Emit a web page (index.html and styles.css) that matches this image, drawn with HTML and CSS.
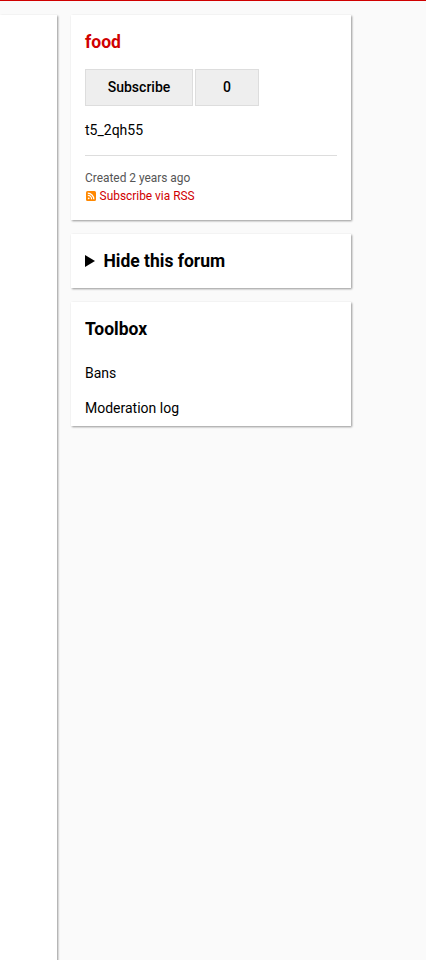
FILE: index.html
```
<!DOCTYPE html>
<html lang="en">
<head>
<meta charset="utf-8">
<title>food</title>
<link rel="stylesheet" href="styles.css">
</head>
<body>
<div class="page">
  <main class="content"></main>
  <aside class="sidebar">
    <section class="card card-forum">
      <h2 class="title"><a class="link" href="#">food</a></h2>
      <div class="subscribe">
        <button class="button button-label">Subscribe</button>
        <span class="button button-count">0</span>
      </div>
      <p class="description">t5_2qh55</p>
      <div class="meta">
        <p>Created 2 years ago</p>
        <p class="rss">
          <svg class="rss-icon" viewBox="0 0 10 10"><rect width="10" height="10" rx="1.5" fill="#ff8800"/><circle cx="2.7" cy="7.3" r=".9" fill="#fff"/><path d="M1.8 4.4a3.8 3.8 0 0 1 3.8 3.8M1.8 2.2a6 6 0 0 1 6 6" fill="none" stroke="#fff" stroke-width="1.2"/></svg>
          <a class="link" href="#">Subscribe via RSS</a>
        </p>
      </div>
    </section>
    <section class="card card-hide">
      <h2 class="title summary"><svg class="arrow" viewBox="0 0 10 12"><path d="M0 0L10 6L0 12Z"/></svg>Hide this forum</h2>
    </section>
    <section class="card card-toolbox">
      <h2 class="title">Toolbox</h2>
      <ul class="tools">
        <li>Bans</li>
        <li>Moderation log</li>
      </ul>
    </section>
  </aside>
</div>
</body>
</html>
```
FILE: styles.css
```
* { box-sizing: border-box; }
html { background: #fff; }
body { margin: 0; font: 14px/21px Roboto, sans-serif; color: #000; }
h2, p, ul { margin: 0; padding: 0; }
.page {
  display: flex;
  gap: 14px;
  width: 426px;
  height: 960px;
  padding-top: 14px;
  border-top: 1px solid #d00000;
  background: #fafafa;
  overflow: hidden;
}
.content { width: 57px; height: 980px; background: #fff; box-shadow: 1px 1px 2px rgba(0, 0, 0, .4); }
.sidebar { display: flex; flex-direction: column; gap: 14px; width: 280px; }
.card { padding: 14px 14px 13px; background: #fff; box-shadow: 1px 1px 2px rgba(0, 0, 0, .4); }
.card-forum { height: 205px; }
.card-hide { height: 54px; }
.card-toolbox { height: 124px; }
.title { font-size: 17.5px; line-height: 27px; font-weight: 700; }
.link { color: #d00000; text-decoration: none; }
.subscribe { display: flex; gap: 2px; margin-top: 13px; }
.button {
  height: 37px;
  padding: 0;
  border: 1px solid #ddd;
  background: #eee;
  font: 500 14px/35px Roboto, sans-serif;
  color: #000;
  text-align: center;
}
.button-label { width: 108px; }
.button-count { width: 64px; }
.description { margin-top: 14px; }
.meta {
  margin-top: 14px;
  padding-top: 13px;
  border-top: 1px solid #ddd;
  font-size: 11.9px;
  line-height: 18px;
  color: #555;
}
.rss { display: flex; align-items: center; gap: 3.6px; }
.rss-icon { width: 10px; height: 10px; margin-left: 1px; }
.summary { display: flex; align-items: center; }
.arrow { width: 10px; height: 12px; margin: -1px 8.4px 0 0; }
.tools { margin-top: 20px; list-style: none; }
.tools li + li { margin-top: 14px; }
```
